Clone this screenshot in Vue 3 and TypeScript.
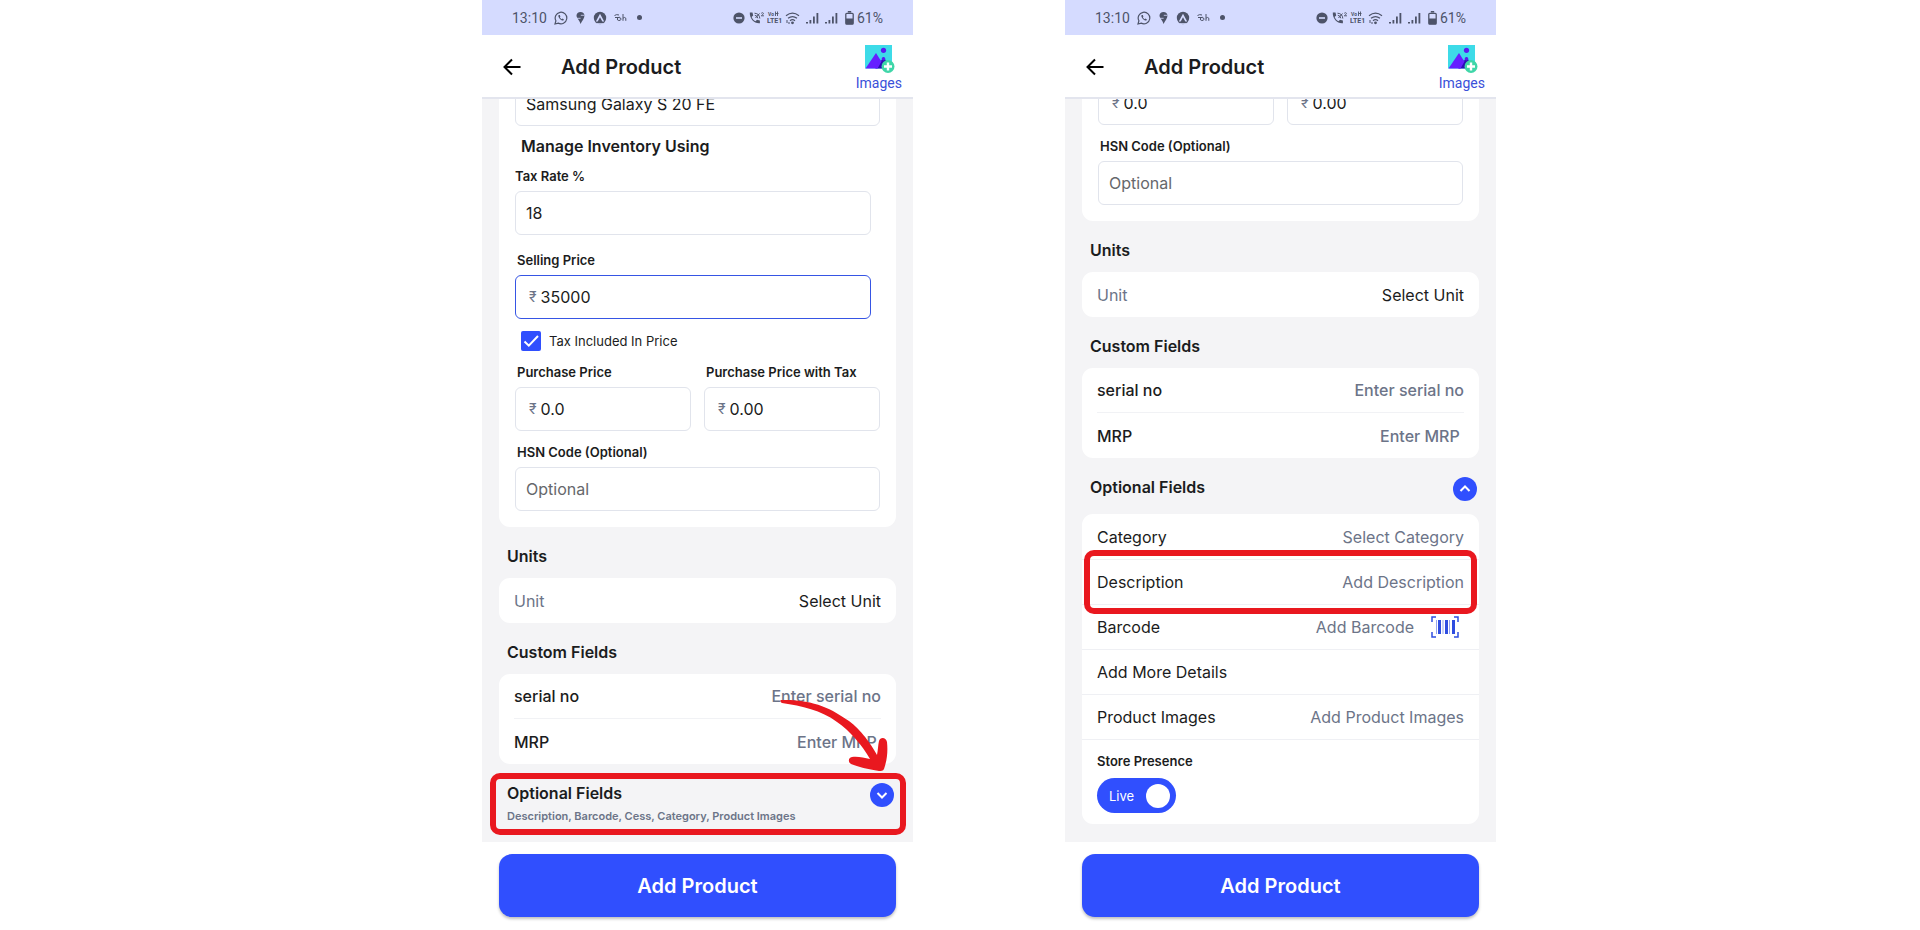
<script setup lang="ts">
import { reactive } from 'vue'

interface Screen {
  id: string
  expanded: boolean
  name: string
  taxRate: string
  sellingPrice: string
  taxIncluded: boolean
  purchasePrice: string
  purchasePriceTax: string
  live: boolean
}

interface CustomField {
  key: string
  label: string
  placeholder: string
}

const makeScreen = (id: string, expanded: boolean): Screen => ({
  id,
  expanded,
  name: 'Samsung Galaxy S 20 FE',
  taxRate: '18',
  sellingPrice: '35000',
  taxIncluded: true,
  purchasePrice: '0.0',
  purchasePriceTax: '0.00',
  live: true,
})

const screens = reactive<Screen[]>([makeScreen('collapsed', false), makeScreen('expanded', true)])

const customFields: CustomField[] = [
  { key: 'serial', label: 'serial no', placeholder: 'Enter serial no' },
  { key: 'mrp', label: 'MRP', placeholder: 'Enter MRP ' },
]
</script>

<template>
  <main class="page">
    <section v-for="s in screens" :key="s.id" class="phone" :class="s.id">
      <div class="status">
        <span class="clock">13:10</span>
        <svg class="ic-wa" width="14" height="14" viewBox="0 0 14 14" fill="none" stroke="currentColor">
          <path d="M1 13l.9-3.2A5.8 5.8 0 1 1 4.200 12.100z" stroke-width="1.200" />
          <path d="M4.700 4.100c-.7.7-.4 2 1 3.600s3 2.100 3.900 1.500l.3-.8-1.400-.8-.8.6C6.800 7.800 6.100 7 5.900 6.300l.5-.7-.6-1.500z" fill="currentColor" stroke="none" />
        </svg>
        <svg class="ic-pin" width="9" height="14" viewBox="0 0 9 14" fill="currentColor">
          <path d="M4.500 1C2.200 1 .5 2.500.5 4.600c0 1 .3 1.800.8 2.500.9 1.400 2.400 3.400 3.200 5.900 1.500-2.800 4-5.600 4-8.400C8.500 2.500 6.800 1 4.500 1z" />
          <path d="M4.800 4.300h3.700M1 7.300h3.600" fill="none" stroke="#d5dbff" stroke-width=".8" />
        </svg>
        <svg class="ic-a" width="14" height="14" viewBox="0 0 14 14">
          <circle cx="7" cy="7" r="6.200" fill="currentColor" />
          <path d="M7 2.800l4.200 7.700H9.300L7 6.300l-2.300 4.200H2.800z" fill="#d5dbff" />
          <path d="M4 12.800h6" stroke="#d5dbff" stroke-width="1.200" />
        </svg>
        <svg class="ic-bh" width="13" height="9" viewBox="0 0 13 9" fill="none" stroke="currentColor" stroke-width="1">
          <path d="M.5 2.500q2-1.500 4.500-.5M1 4.500h4q2.200.2 2 1.700-.3 1.500-2.200 1.300-1.600-.2-1.500-1.500t2-2M9 1v6.800M9 5.200q1.700-1.500 2.800 0v2.600" />
        </svg>
        <span class="dot"></span>
        <span class="spacer"></span>
        <svg width="12" height="12" viewBox="0 0 12 12"><circle cx="6" cy="6" r="5.600" fill="currentColor" /><path d="M3 6h6" stroke="#d5dbff" stroke-width="1.600" /></svg>
        <svg class="ic-call" width="16" height="14" viewBox="0 0 16 14" fill="none" stroke="currentColor">
          <path d="M.8 1.500h2.700l.7 3-1.600 1.500c.8 1.900 2 3.200 3.900 4.200L8 8.800l2.900.7v2.700C5.500 12.800.5 8 .8 1.500z" fill="currentColor" stroke="none" />
          <path d="M5.500 2.200q5 .3 5.300 5.300M5.800 4.300q2.700.3 3 3M6.500 7l4-4.500" stroke-width="1" />
          <path d="M12.200 2.300q1.700-1.300 2.300 0-.1 1-2.200 2.500h2.700" stroke-width=".9" />
        </svg>
        <svg class="ic-volte" width="16" height="15" viewBox="0 0 16 15" fill="currentColor" font-family="Roboto, sans-serif" font-weight="700">
          <text x="1" y="6" font-size="5">Vo</text><path d="M8.500 1.500v4.500M10.500 1.500v4.500M8.500 3.500h3" stroke="currentColor" stroke-width=".9" />
          <text x="0" y="13" font-size="7">LTE1</text>
        </svg>
        <svg class="ic-wifi" width="15" height="14" viewBox="0 0 15 14" fill="none" stroke="currentColor" stroke-width="1.200">
          <path d="M1 4.700q6.500-5 13 0M3 7.300q4.500-3.400 9 0M5 9.700q2.500-2 5 0" /><circle cx="7.500" cy="11.800" r=".8" fill="currentColor" /><path d="M2 9v3M4 11v2" stroke-width="1" />
        </svg>
        <svg v-for="n in 2" :key="n" class="ic-sig" width="13" height="12" viewBox="0 0 13 12" fill="currentColor"><path d="M0 10h2v1.500H0zM3.500 8h1.800v3.500H3.500zM7 4.500h1.800v7H7zM10.500 1h1.800v10.500h-1.800z" /></svg>
        <svg class="ic-bat" width="9" height="14" viewBox="0 0 9 14" fill="none" stroke="currentColor"><path d="M2.800.8h3.400" stroke-width="1.600" /><rect x=".8" y="2.300" width="7.400" height="10.900" rx="1" stroke-width="1.300" /><path d="M1 7.500h7v5.700H1z" fill="currentColor" stroke="none" /></svg>
        <span class="battery">61%</span>
      </div>

      <header class="bar">
        <button class="back" type="button" aria-label="Back">
          <svg width="20" height="20" viewBox="0 0 20 20" fill="none" stroke="#000" stroke-width="2"><path d="M18.500 10H3M10 2.500L2.500 10l7.500 7.500" /></svg>
        </button>
        <h1>Add Product</h1>
        <button class="images" type="button">
          <svg width="32" height="28" viewBox="0 0 32 28">
            <path d="M2 0h27v23.500H2z" fill="#3ddbe8" />
            <path d="M13 23.500L20.500 12l8 11.500z" fill="#2a0fb4" />
            <path d="M2.500 23.500L13 8l5 8-4 7.500z" fill="#651fff" />
            <path d="M12 23.500L16.500 14l2 2.500-4 7z" fill="#651fff" />
            <circle cx="20.500" cy="5.300" r="2.600" fill="#5a1cf0" />
            <circle cx="20.500" cy="13.800" r="1.800" fill="#5a1cf0" />
            <circle cx="25" cy="21.500" r="6.500" fill="#3fd6a8" />
            <path d="M25 17.500v8M21 21.500h8" stroke="#fff" stroke-width="2.400" />
          </svg>
          <span>Images</span>
        </button>
      </header>

      <form :id="`${s.id}-form`" class="body" @submit.prevent>
        <div class="card item">
          <template v-if="!s.expanded">
            <input v-model="s.name" class="box" type="text" aria-label="Product name" />
            <h2 class="inventory">Manage Inventory Using</h2>
            <div class="field narrow">
              <label class="flush" :for="`${s.id}-tax`">Tax Rate %</label>
              <input :id="`${s.id}-tax`" v-model="s.taxRate" class="box" type="text" />
            </div>
            <div class="field narrow spaced">
              <label :for="`${s.id}-sell`">Selling Price</label>
              <div class="box money active">
                <span>₹</span><input :id="`${s.id}-sell`" v-model="s.sellingPrice" type="text" />
              </div>
            </div>
            <label class="check">
              <span class="tick">
                <input v-model="s.taxIncluded" type="checkbox" />
                <svg v-if="s.taxIncluded" width="20" height="20" viewBox="0 0 20 20" fill="none" stroke="#fff" stroke-width="2"><path d="M3.500 10.500l4.300 4.200L17 5" /></svg>
              </span>
              Tax Included In Price
            </label>
          </template>
          <div class="pair">
            <div class="field">
              <label v-if="!s.expanded" :for="`${s.id}-pp`">Purchase Price</label>
              <div class="box money"><span>₹</span><input :id="`${s.id}-pp`" v-model="s.purchasePrice" type="text" aria-label="Purchase Price" /></div>
            </div>
            <div class="field">
              <label v-if="!s.expanded" :for="`${s.id}-ppt`">Purchase Price with Tax</label>
              <div class="box money"><span>₹</span><input :id="`${s.id}-ppt`" v-model="s.purchasePriceTax" type="text" aria-label="Purchase Price with Tax" /></div>
            </div>
          </div>
          <div class="field">
            <label :for="`${s.id}-hsn`">HSN Code (Optional)</label>
            <input :id="`${s.id}-hsn`" class="box" type="text" placeholder="Optional" />
          </div>
        </div>

        <h2 class="heading">Units</h2>
        <div class="card">
          <div class="row">
            <label class="muted" :for="`${s.id}-unit`">Unit</label>
            <select :id="`${s.id}-unit`" class="value dark"><option>Select Unit</option></select>
          </div>
        </div>

        <h2 class="heading">Custom Fields</h2>
        <div class="card custom">
          <div v-for="f in customFields" :key="f.key" class="row">
            <label :for="`${s.id}-${f.key}`">{{ f.label }}</label>
            <input :id="`${s.id}-${f.key}`" class="value" type="text" :placeholder="f.placeholder" />
          </div>
        </div>

        <div class="optional">
          <div>
            <h2>Optional Fields</h2>
            <p v-if="!s.expanded">Description, Barcode, Cess, Category, Product Images</p>
          </div>
          <button class="toggle" type="button" :aria-expanded="s.expanded" aria-label="Toggle optional fields">
            <svg width="24" height="24" viewBox="0 0 24 24" fill="none" stroke="#fff" stroke-width="2"><path :d="s.expanded ? 'M7.500 14l4.500-4.500 4.500 4.500' : 'M7.500 10l4.500 4.500 4.500-4.500'" /></svg>
          </button>
          <template v-if="!s.expanded">
            <span class="mark around-header"></span>
            <svg class="arrow" width="110" height="76" viewBox="0 0 110 76" fill="#e9181f">
              <path d="M1 2C33 1 52 11 69 23 81 32 91 46 97 57 98 52 98 47 99 43 100 39 106 39 107 44 108 54 107 62 104 71 103 73 101 73 99 73 88 71 78 69 71 66 68 64 68 60 72 59 78 58 84 60 90 61 82 47 70 33 57 24 41 12 22 8 2 5 0 4 0 2 1 2z" />
            </svg>
          </template>
        </div>

        <div v-if="s.expanded" class="card extra">
          <div class="row">
            <label :for="`${s.id}-cat`">Category</label>
            <select :id="`${s.id}-cat`" class="value"><option>Select Category</option></select>
          </div>
          <div class="row marked">
            <label :for="`${s.id}-desc`">Description</label>
            <input :id="`${s.id}-desc`" class="value" type="text" placeholder="Add Description" />
            <span class="mark around-row"></span>
          </div>
          <div class="row">
            <label :for="`${s.id}-bar`">Barcode</label>
            <input :id="`${s.id}-bar`" class="value" type="text" placeholder="Add Barcode" />
            <button class="scan" type="button" aria-label="Scan barcode">
              <svg width="28" height="22" viewBox="0 0 28 22" fill="none" stroke="#2f4de0">
                <path d="M1 6V1h4M23 1h4v5M27 16v5h-4M5 21H1v-5" stroke-width="1.500" />
                <path d="M8.500 4v14M15.500 4v14M22.500 4v14" stroke-width="3" />
                <path d="M5.500 4v14M12 4v14M18.500 4v14" stroke-width="1" opacity=".5" />
              </svg>
            </button>
          </div>
          <div class="row"><a href="#">Add More Details</a></div>
          <div class="row">
            <span>Product Images</span>
            <button class="value" type="button">Add Product Images</button>
          </div>
          <div class="store">
            <label :for="`${s.id}-live`">Store Presence</label>
            <div class="switch">
              <input :id="`${s.id}-live`" v-model="s.live" type="checkbox" role="switch" />
              <span class="state">Live</span>
              <span class="knob"></span>
            </div>
          </div>
        </div>
      </form>

      <footer class="foot">
        <button type="submit" :form="`${s.id}-form`">Add Product</button>
      </footer>
    </section>
  </main>
</template>

<style>
body {
  margin: 0;
  background: #fff;
}
</style>

<style scoped>
* {
  box-sizing: border-box;
}
.page {
  display: grid;
  grid-template-columns: 482fr 431fr 152fr 431fr 424fr;
  height: 100vh;
  font-family: Inter, "Liberation Sans", sans-serif;
  color: #1b1c20;
}
.phone {
  display: flex;
  flex-direction: column;
  min-width: 0;
  min-height: 0;
}
.phone.collapsed {
  grid-column: 2;
}
.phone.expanded {
  grid-column: 4;
}
h1,
h2,
p {
  margin: 0;
}
button,
input,
select {
  font: inherit;
  color: inherit;
  border: 0;
  padding: 0;
  margin: 0;
  background: none;
  outline: none;
}
svg {
  display: block;
  flex: none;
}

/* status bar */
.status {
  display: flex;
  align-items: center;
  flex: none;
  height: 35px;
  padding: 0 30px;
  background: #d5dbff;
  color: #4d5369;
  font: 14px/20px Roboto, sans-serif;
}
.ic-wa,
.ic-bh {
  margin-left: 7px;
}
.ic-pin,
.ic-a {
  margin-left: 8px;
}
.dot {
  width: 5px;
  height: 5px;
  margin-left: 10px;
  border-radius: 50%;
  background: currentColor;
}
.spacer {
  flex: 1;
}
.ic-call {
  margin-left: 4px;
}
.ic-volte,
.ic-wifi {
  margin-left: 2px;
}
.ic-sig {
  margin-left: 6px;
}
.ic-bat {
  margin-left: 7px;
}
.battery {
  margin-left: 3px;
}

/* app bar */
.bar {
  display: flex;
  align-items: center;
  flex: none;
  height: 64px;
  padding: 2px 11px 0 20px;
  border-bottom: 2px solid #e3e5ee;
  background: #fff;
}
.bar h1 {
  flex: 1;
  margin-left: 39px;
  font-size: 20px;
  line-height: 24px;
  font-weight: 600;
}
.images {
  display: flex;
  flex-direction: column;
  align-items: center;
  padding-top: 4px;
  color: #3a50d9;
  font: 14px/20px Roboto, sans-serif;
}

/* scrolled form */
.body {
  display: flex;
  flex-direction: column;
  justify-content: flex-end;
  flex: 1;
  min-height: 0;
  overflow: hidden;
  padding-bottom: 18px;
  background: #f4f4f6;
  font-size: 16px;
  line-height: 20px;
}
.card {
  flex: none;
  margin: 0 17px;
  border-radius: 11px;
  background: #fff;
}
.item {
  padding: 16px;
}
.box {
  display: block;
  width: 100%;
  height: 44px;
  padding: 0 10px;
  border: 1px solid #e1e4ec;
  border-radius: 6px;
}
.box::placeholder {
  color: #66676b;
  opacity: 1;
}
.inventory {
  margin: 10px 6px 0;
  font-size: 16px;
  line-height: 20px;
  font-weight: 600;
}
.field {
  flex: 1;
  min-width: 0;
  margin-top: 12px;
}
.inventory + .field {
  margin-top: 11px;
}
.field.spaced {
  margin-top: 16px;
}
.field.narrow {
  margin-right: 9px;
}
.field label {
  display: block;
  margin: 0 2px 6px;
  font-size: 13px;
  line-height: 18px;
  font-weight: 600;
}
.field label.flush {
  margin-left: 0;
}
.pair {
  display: flex;
  gap: 13px;
}
.money {
  display: flex;
  align-items: center;
  gap: 4px;
  padding-left: 13px;
}
.money span {
  color: #6c7488;
  font-size: 14px;
}
.money input {
  flex: 1;
  min-width: 0;
}
.active {
  border-color: #3655e4;
}
.check {
  display: flex;
  align-items: center;
  gap: 8px;
  margin: 12px 6px 0;
  font-size: 13px;
}
.tick {
  display: grid;
}
.tick input,
.tick svg {
  grid-area: 1 / 1;
}
.tick svg {
  pointer-events: none;
}
.tick input {
  appearance: none;
  width: 20px;
  height: 20px;
  border-radius: 2px;
  background: #304ffe;
}
.heading {
  flex: none;
  margin: 19px 25px 12px;
  font-size: 16px;
  line-height: 20px;
  font-weight: 600;
}
.row {
  display: flex;
  align-items: center;
  height: 45px;
  margin: 0 15px;
}
.value {
  flex: 1;
  min-width: 0;
  text-align: right;
  color: #6c7488;
}
.value::placeholder {
  color: #6c7488;
  opacity: 1;
}
select.value {
  appearance: none;
  text-align-last: right;
}
.value.dark {
  color: #1b1c20;
}
.muted {
  color: #6c7488;
}
.row a {
  color: inherit;
  text-decoration: none;
}
.custom .row {
  font-weight: 500;
}
.custom .row:first-child {
  border-bottom: 1px solid #f1f2f5;
}

/* collapsible header */
.optional {
  position: relative;
  display: flex;
  justify-content: space-between;
  align-items: flex-start;
  flex: none;
  padding: 19px 19px 0 25px;
}
.optional h2 {
  font-size: 16px;
  line-height: 20px;
  font-weight: 600;
}
.optional p {
  margin-top: 5px;
  color: #6c7488;
  font-size: 11px;
  line-height: 16px;
  font-weight: 600;
}
.toggle {
  border-radius: 50%;
  background: #304ffe;
}
.mark {
  position: absolute;
  border: 6px solid #e9181f;
  border-radius: 10px;
  pointer-events: none;
}
.around-header {
  inset: 9px 7px -11px 8px;
}
.arrow {
  position: absolute;
  top: -66px;
  right: 23px;
}

/* expanded fields */
.extra {
  margin-top: 13px;
  padding-top: 1px;
}
.extra .row {
  margin: 0;
  padding: 0 15px;
  border-bottom: 1px solid #eff0f4;
}
.marked {
  position: relative;
}
.around-row {
  inset: -10px 2px;
}
.scan {
  margin: 0 5px 0 17px;
}
.store {
  padding: 12px 15px 11px;
}
.store label {
  display: block;
  margin-bottom: 8px;
  font-size: 13px;
  line-height: 18px;
  font-weight: 600;
}
.switch {
  display: grid;
  width: 79px;
  align-items: center;
  color: #fff;
  font-size: 13px;
}
.switch > * {
  grid-area: 1 / 1;
}
.switch input {
  appearance: none;
  height: 35px;
  border-radius: 18px;
  background: #304ffe;
}
.state {
  margin-left: 12px;
  pointer-events: none;
}
.knob {
  justify-self: end;
  width: 24px;
  height: 24px;
  margin-right: 6px;
  border-radius: 50%;
  background: #fff;
  pointer-events: none;
}

.foot {
  flex: none;
  padding: 12px 17px 13px;
  background: #fff;
}
.foot button {
  display: block;
  width: 100%;
  height: 63px;
  border-radius: 13px;
  background: #304ffe;
  box-shadow: 0 2px 3px rgba(0, 0, 0, 0.25);
  color: #fff;
  font-size: 20px;
  font-weight: 600;
}
</style>
